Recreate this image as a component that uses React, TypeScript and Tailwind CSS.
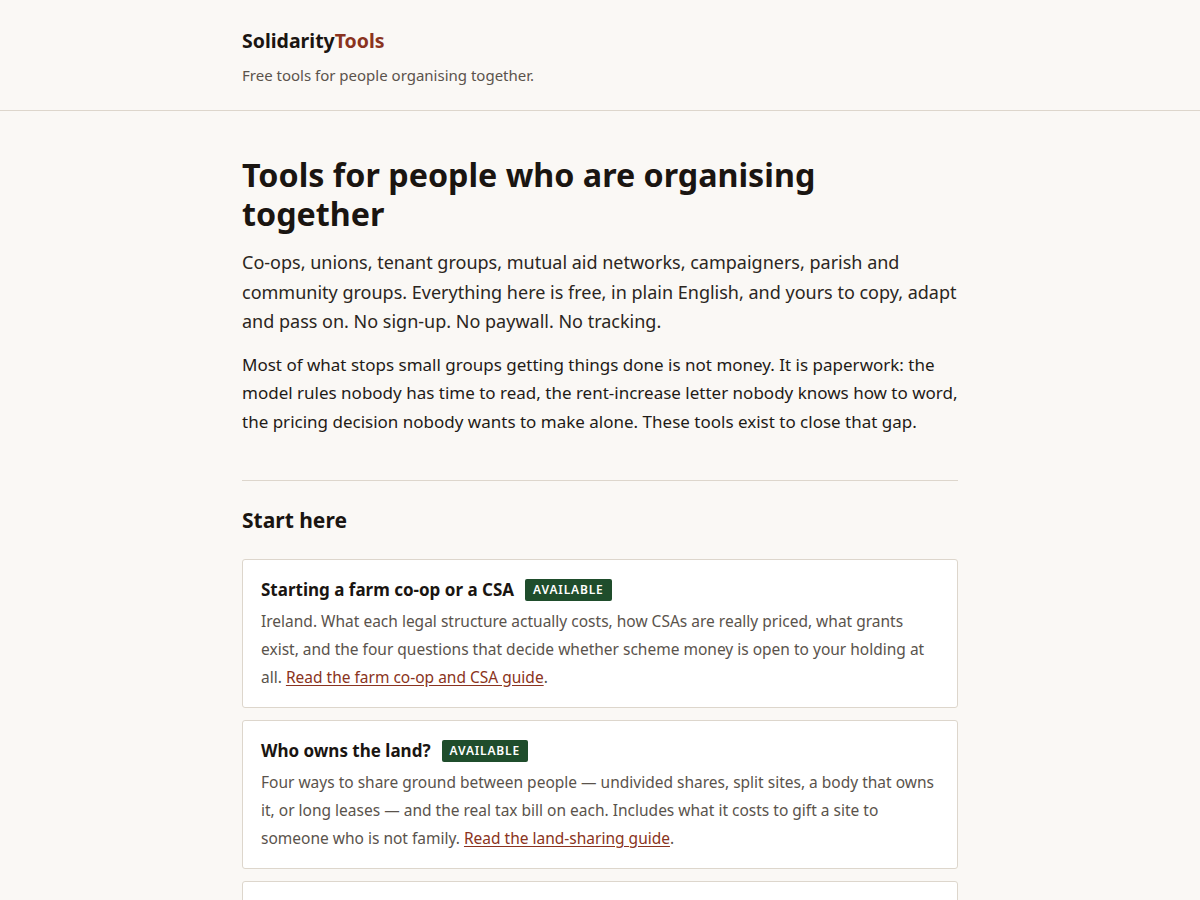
const cards = [
  {
    title: 'Starting a farm co-op or a CSA',
    body: 'Ireland. What each legal structure actually costs, how CSAs are really priced, what grants exist, and the four questions that decide whether scheme money is open to your holding at all. ',
    link: 'Read the farm co-op and CSA guide',
  },
  {
    title: 'Who owns the land?',
    body: 'Four ways to share ground between people — undivided shares, split sites, a body that owns it, or long leases — and the real tax bill on each. Includes what it costs to gift a site to someone who is not family. ',
    link: 'Read the land-sharing guide',
  },
  {
    title: 'Pricing a shared harvest',
    body: 'How to set a share price that covers the grower, the land and the bad years, without pricing out the people you started for. ',
    link: 'Read the pricing guide',
  },
]

export default function App() {
  return (
    <div className="min-h-screen bg-[#faf8f5] text-[#1c1814]" style={{ fontFamily: '"Noto Sans", "Open Sans", sans-serif' }}>
      <header className="border-b border-[#ddd6cc]">
        <div className="mx-auto w-[716px] pt-[27px] pb-[24px]">
          <div className="text-[19.5px] font-bold leading-[28px] text-[#1a1511]">
            Solidarity<span className="text-[#8a3320]">Tools</span>
          </div>
          <p className="mt-[9px] text-[15px] leading-[22px] text-[#5a534c]">Free tools for people organising together.</p>
        </div>
      </header>

      <main className="mx-auto w-[716px] pt-[44px]">
        <h1 className="text-[32.25px] font-bold leading-[39px] text-[#1a1511]">
          Tools for people who are organising together
        </h1>
        <p className="mt-[15px] text-[18px] leading-[29.5px] text-[#2b2621]">
          Co-ops, unions, tenant groups, mutual aid networks, campaigners, parish and community groups. Everything here is free, in plain English, and yours to copy, adapt and pass on. No sign-up. No paywall. No tracking.
        </p>
        <p className="mt-[14px] text-[17px] leading-[28.7px] text-[#1f1b17]">
          Most of what stops small groups getting things done is not money. It is paperwork: the model rules nobody has time to read, the rent-increase letter nobody knows how to word, the pricing decision nobody wants to make alone. These tools exist to close that gap.
        </p>

        <hr className="mt-[43px] border-0 border-t border-[#ddd6cc]" />

        <h2 className="mt-[24px] text-[21px] font-bold leading-[30px] text-[#1a1511]">Start here</h2>

        <div className="mt-[24px] flex flex-col gap-[12px]">
          {cards.map((card) => (
            <div key={card.title} className="rounded-[3px] border border-[#ddd6cc] bg-white px-[18px] pt-[16px] pb-[16px]">
              <div className="flex items-center gap-[11px]">
                <h3 className="text-[17px] font-bold leading-[28px] text-[#1a1511]">{card.title}</h3>
                <span className="rounded-[2px] bg-[#1f4d2c] px-[8px] py-[2px] text-[12px] font-semibold uppercase leading-[18px] tracking-[0.07em] text-white">
                  Available
                </span>
              </div>
              <p className="mt-[3px] text-[15.5px] leading-[28px] text-[#5a534c]">
                {card.body}
                <a href="#" className="text-[#8a3320] underline underline-offset-2">{card.link}</a>.
              </p>
            </div>
          ))}
        </div>
      </main>
    </div>
  )
}
